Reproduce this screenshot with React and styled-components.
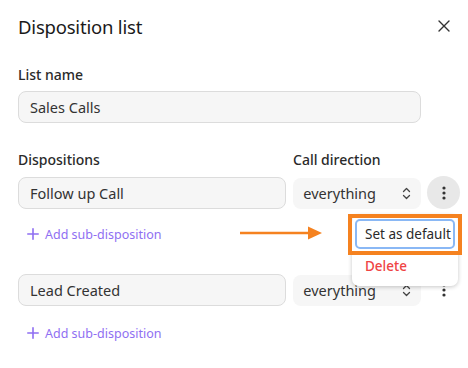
import React from "react";
import styled, { createGlobalStyle } from "styled-components";

const Global = createGlobalStyle`
  html, body { margin: 0; padding: 0; background: #fff; }
  body { font-family: "Segoe UI", "Noto Sans", sans-serif; color: #1f1f1f; }
  * { box-sizing: border-box; }
`;

const Dialog = styled.div`
  position: relative;
  width: 468px;
  height: 368px;
  padding: 12px 8px 0 18px;
  display: flex;
  flex-direction: column;
`;

const Header = styled.div`
  display: flex;
  align-items: center;
  justify-content: space-between;
  height: 28px;
`;

const Title = styled.h1`
  margin: 0;
  font-size: 18.5px;
  font-weight: 400;
  color: #1a1a1a;
  letter-spacing: -0.2px;
`;

const CloseBtn = styled.button`
  border: 0;
  background: none;
  width: 20px;
  height: 20px;
  margin-right: 6px;
  padding: 0;
  display: flex;
  align-items: center;
  justify-content: center;
  color: #333;
`;

const Label = styled.div`
  font-size: 14px;
  font-weight: 500;
  color: #2a2a2a;
  height: 20px;
  line-height: 20px;
  margin-top: ${(p) => p.$top || 0}px;
`;

const TextInput = styled.div`
  width: ${(p) => p.$w}px;
  height: 32px;
  border: 1px solid #dcdcdc;
  border-radius: 8px;
  background: #f6f6f6;
  padding: 0 11px;
  display: flex;
  align-items: center;
  font-size: 14.5px;
  color: #333;
  margin-top: ${(p) => p.$top || 0}px;
`;

const LabelRow = styled.div`
  display: grid;
  grid-template-columns: 275px 1fr;
  margin-top: 27px;
`;

const Row = styled.div`
  display: flex;
  align-items: center;
  gap: 6px;
  margin-top: ${(p) => p.$top}px;
  position: relative;
`;

const Select = styled.div`
  width: 128px;
  height: 31px;
  margin-left: 1px;
  margin-top: 1px;
  border-radius: 8px;
  background: #f6f6f6;
  padding: 0 10px 0 10px;
  display: flex;
  align-items: center;
  justify-content: space-between;
  font-size: 14.5px;
  color: #333;
`;

const Kebab = styled.button`
  width: 33px;
  height: 33px;
  border-radius: 50%;
  border: 0;
  padding: 0;
  background: ${(p) => (p.$active ? "#e8e8e8" : "transparent")};
  display: flex;
  align-items: center;
  justify-content: center;
  color: #333;
`;

const AddLink = styled.div`
  display: flex;
  align-items: center;
  gap: 6px;
  padding-left: 9px;
  margin-top: ${(p) => p.$top}px;
  font-size: 12.5px;
  color: #8f6ff2;
  height: 18px;
`;

const Menu = styled.div`
  position: absolute;
  left: 334px;
  top: 39px;
  width: 106px;
  background: #fff;
  border-radius: 7px;
  box-shadow: 0 1px 4px rgba(0, 0, 0, 0.22);
  padding: 4px 3px 5px 3px;
  display: flex;
  flex-direction: column;
  gap: 2px;
  z-index: 2;
`;

const MenuItem = styled.div`
  height: 30px;
  display: flex;
  align-items: center;
  padding-left: 8px;
  font-size: 13.5px;
  border-radius: 5px;
  color: ${(p) => (p.$danger ? "#ef4444" : "#2a2a2a")};
  border: ${(p) => (p.$focus ? "2px solid #8ab8f5" : "2px solid transparent")};
  font-weight: ${(p) => (p.$danger ? 500 : 400)};
`;

const Highlight = styled.div`
  position: absolute;
  left: 330px;
  top: 38px;
  width: 114px;
  height: 41px;
  border: 4px solid #f58220;
  z-index: 3;
`;

const Arrow = styled.svg`
  position: absolute;
  left: 204px;
  top: 50px;
  z-index: 3;
`;

const Chevrons = () => (
  <svg width="9" height="13" viewBox="0 0 9 13" fill="none" stroke="#444" strokeWidth="1.3" strokeLinecap="round" strokeLinejoin="round">
    <path d="M1.5 4.5 4.5 1.5 7.5 4.5" />
    <path d="M1.5 8.5 4.5 11.5 7.5 8.5" />
  </svg>
);

const Dots = () => (
  <svg width="4" height="14" viewBox="0 0 4 14" fill="#333">
    <circle cx="2" cy="2" r="1.6" />
    <circle cx="2" cy="7" r="1.6" />
    <circle cx="2" cy="12" r="1.6" />
  </svg>
);

const Plus = () => (
  <svg width="12" height="12" viewBox="0 0 12 12" stroke="#8f6ff2" strokeWidth="1.6" strokeLinecap="round">
    <path d="M6 0.8v10.4M0.8 6h10.4" />
  </svg>
);

export default function App() {
  return (
    <>
      <Global />
      <Dialog>
        <Header>
          <Title>Disposition list</Title>
          <CloseBtn aria-label="close">
            <svg width="12" height="12" viewBox="0 0 12 12" stroke="#333" strokeWidth="1.4" strokeLinecap="round">
              <path d="M1 1l10 10M11 1 1 11" />
            </svg>
          </CloseBtn>
        </Header>
        <Label $top={25}>List name</Label>
        <TextInput $w={403} $top={6}>Sales Calls</TextInput>
        <LabelRow>
          <Label>Dispositions</Label>
          <Label>Call direction</Label>
        </LabelRow>
        <Row $top={6}>
          <TextInput $w={269}>Follow up Call</TextInput>
          <Select>
            everything
            <Chevrons />
          </Select>
          <Kebab $active>
            <Dots />
          </Kebab>
          <Menu>
            <MenuItem $focus>Set as default</MenuItem>
            <MenuItem $danger>Delete</MenuItem>
          </Menu>
          <Highlight />
          <Arrow width="102" height="14" viewBox="0 0 102 14">
            <path d="M18 7h74" stroke="#f58220" strokeWidth="2.5" />
            <path d="M86 0.5 100 7 86 13.5z" fill="#f58220" />
          </Arrow>
        </Row>
        <AddLink $top={16}>
          <Plus />
          Add sub-disposition
        </AddLink>
        <Row $top={30}>
          <TextInput $w={269}>Lead Created</TextInput>
          <Select>
            everything
            <Chevrons />
          </Select>
          <Kebab>
            <Dots />
          </Kebab>
        </Row>
        <AddLink $top={18}>
          <Plus />
          Add sub-disposition
        </AddLink>
      </Dialog>
    </>
  );
}
